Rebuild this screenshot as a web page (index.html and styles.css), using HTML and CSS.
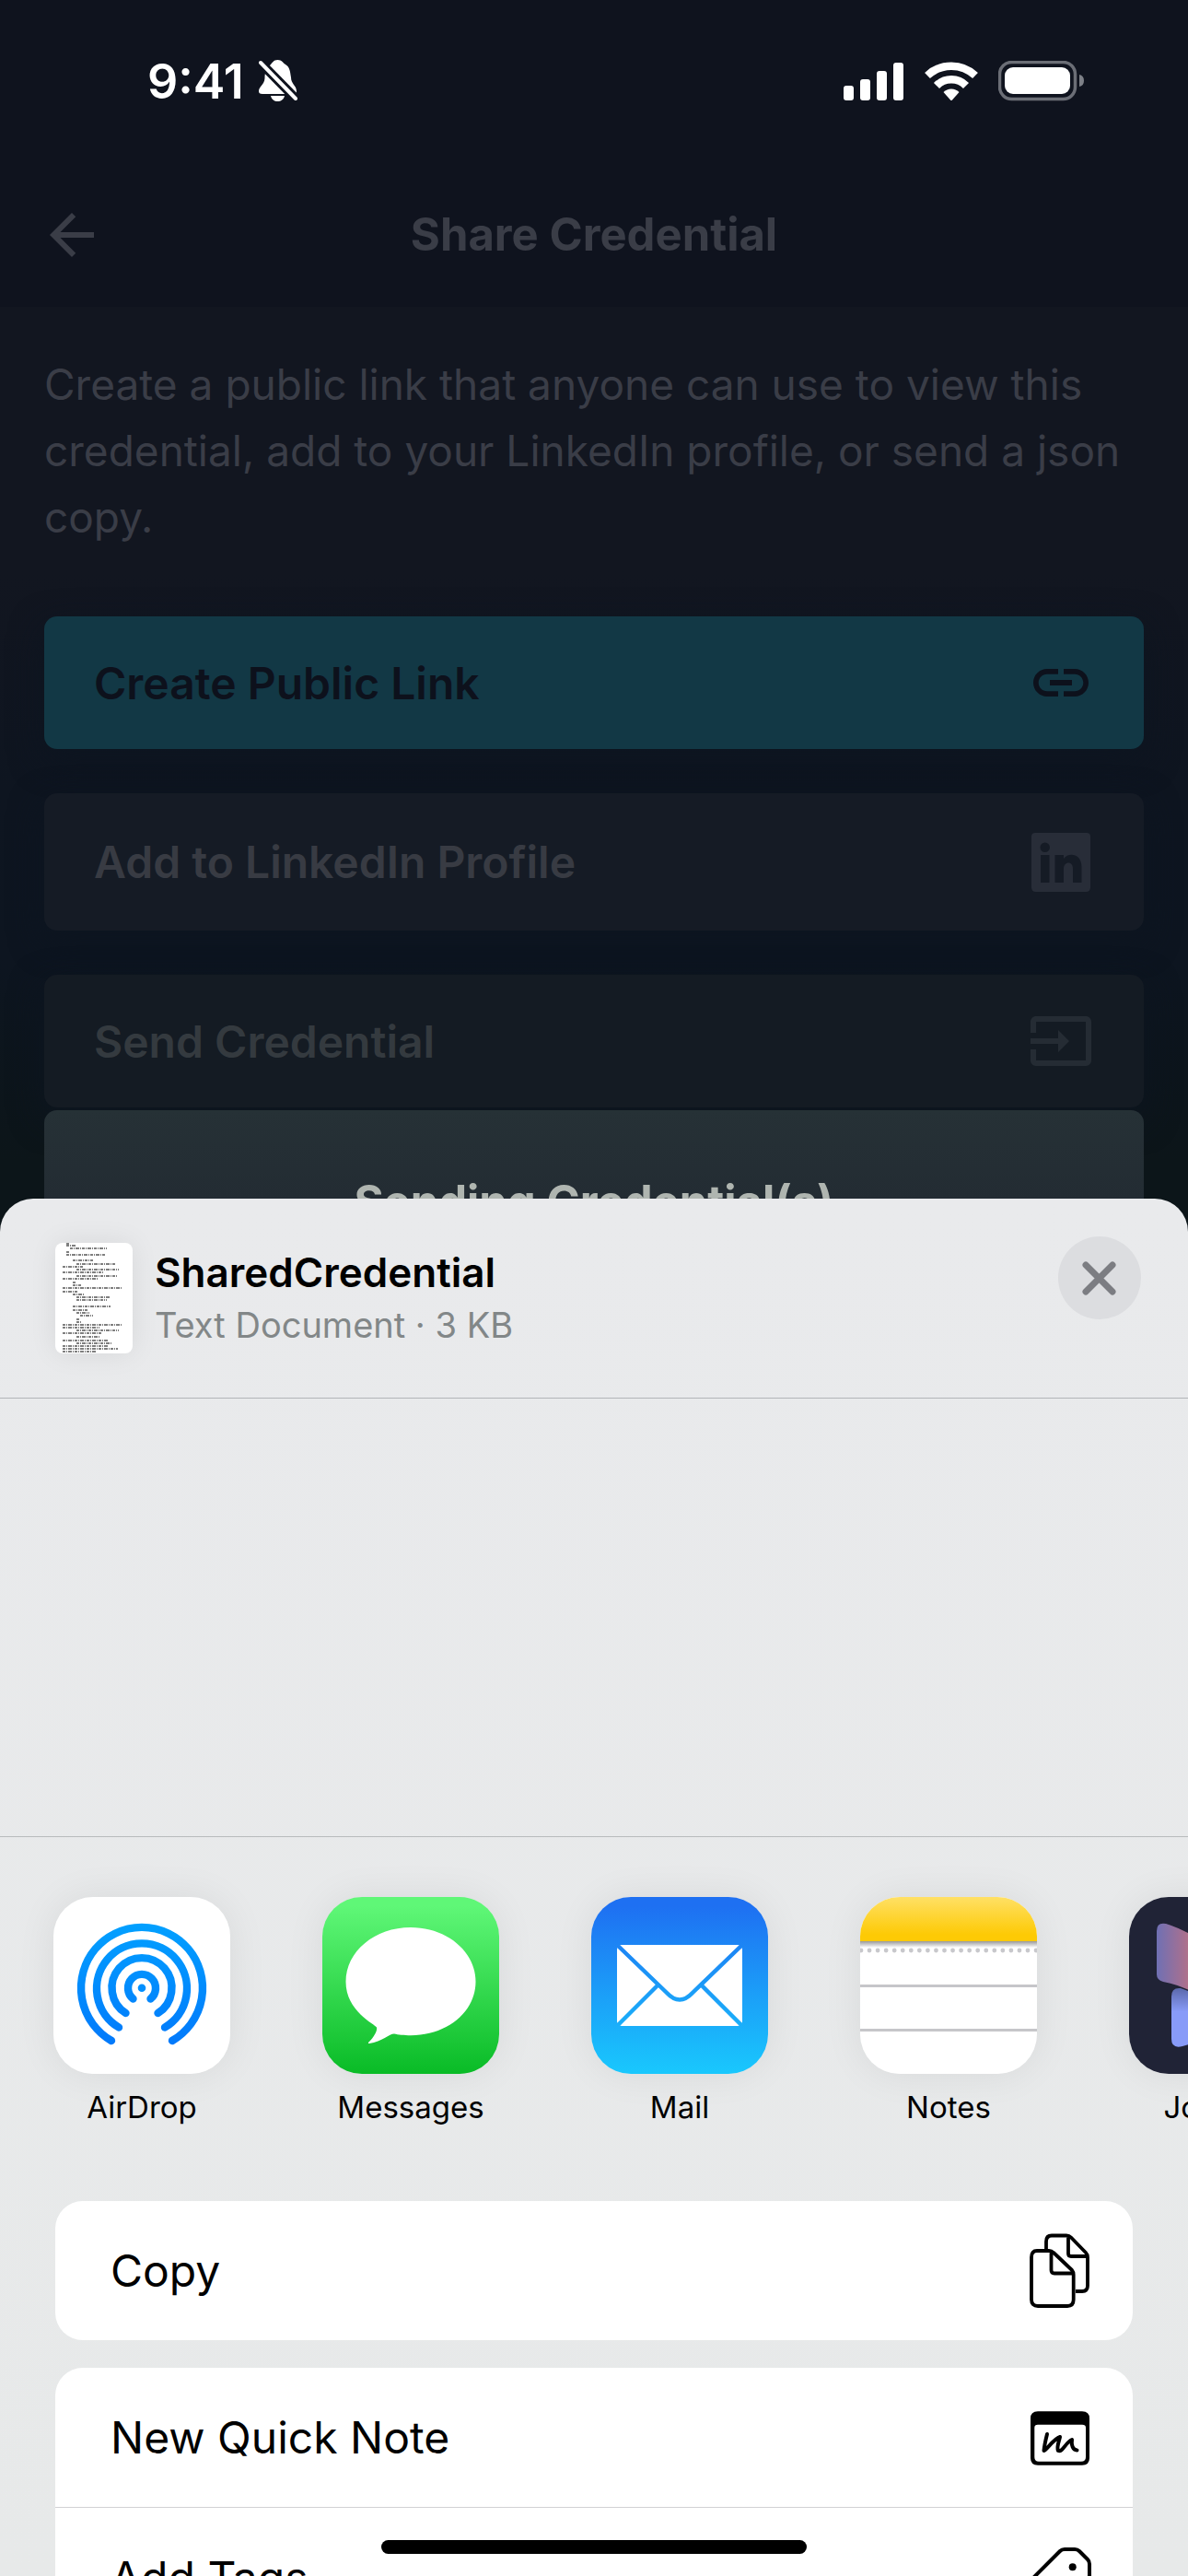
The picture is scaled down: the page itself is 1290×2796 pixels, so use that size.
FILE: index.html
```html
<!DOCTYPE html>
<html lang="en">
<head>
<meta charset="utf-8">
<meta name="viewport" content="width=device-width, initial-scale=1">
<title>Share Credential</title>
<link rel="stylesheet" href="styles.css">
</head>
<body>
<div class="screen">
  <div class="statusbar">
    <div class="status-left">
      <span>9:41</span>
      <svg width="42" height="48" viewBox="0 0 42 48" aria-hidden="true">
        <path fill="#fff" d="M12 7C15 4 16 1 20.500 1S26 4 29 6C34 9 34 14 35 20C35 27 41 29 41 35C41 37 40 38 37 38H4C1 38 0 37 0 35C0 30 6 28 6.500 21C6.500 15 8 10 12 7ZM13 40H28C27 44 24 46 20.500 46S14 44 13 40Z"/>
        <path stroke="#0f131e" stroke-width="10" d="M-2 0L44 47"/>
        <path stroke="#fff" stroke-width="4" stroke-linecap="round" d="M2 4L40 43"/>
      </svg>
    </div>
    <div class="status-right">
      <svg width="66" height="44" viewBox="0 0 66 44" fill="#fff" aria-hidden="true">
        <rect x="0" y="27" width="11" height="16" rx="3"/><rect x="18" y="20" width="11" height="23" rx="3"/><rect x="36" y="11" width="11" height="32" rx="3"/><rect x="54" y="2" width="11" height="41" rx="3"/>
      </svg>
      <svg width="58" height="44" viewBox="0 0 58 44" aria-hidden="true">
        <g fill="none" stroke="#fff" stroke-width="8.500"><path d="M3 16A38 38 0 0 1 55 16"/><path d="M13 27A22.500 22.500 0 0 1 45 27"/></g>
        <path fill="#fff" d="M20.500 34A12 12 0 0 1 37.500 34L30 42.500Q29 43.500 28 42.500Z"/>
      </svg>
      <svg width="94" height="44" viewBox="0 0 94 44" aria-hidden="true">
        <rect x="1.500" y="1.500" width="82" height="40" rx="13" fill="none" stroke="#6b6e76" stroke-width="3.500"/>
        <rect x="7" y="7" width="71" height="29" rx="9" fill="#fff"/>
        <path fill="#7d8087" d="M88 15Q93 16 93 21.500T88 28Z"/>
      </svg>
    </div>
  </div>

  <header class="topbar">
    <button class="back" aria-label="Back">
      <svg width="72" height="72" viewBox="0 0 24 24" fill="currentColor"><path d="M20 11H7.830l5.590-5.590L12 4l-8 8 8 8 1.410-1.410L7.830 13H20v-2z"/></svg>
    </button>
    <h1>Share Credential</h1>
  </header>

  <main class="content">
    <p>Create a public link that anyone can use to view this credential, add to your LinkedIn profile, or send a json copy.</p>
    <div class="options">
      <button class="option option-primary">
        <span>Create Public Link</span>
        <svg width="72" height="72" viewBox="0 0 24 24" fill="currentColor" aria-hidden="true"><path d="M3.900 12c0-1.710 1.390-3.100 3.100-3.100h4V7H7c-2.760 0-5 2.240-5 5s2.240 5 5 5h4v-1.900H7c-1.710 0-3.100-1.390-3.100-3.100zM8 13h8v-2H8v2zm9-6h-4v1.900h4c1.710 0 3.100 1.390 3.100 3.100s-1.390 3.100-3.100 3.100h-4V17h4c2.760 0 5-2.240 5-5s-2.240-5-5-5z"/></svg>
      </button>
      <button class="option option-tall">
        <span>Add to LinkedIn Profile</span>
        <svg width="72" height="72" viewBox="0 0 72 72" fill="currentColor" aria-hidden="true"><path fill-rule="evenodd" d="M8 4H64Q68 4 68 8V63Q68 68 63 68H9Q4 68 4 63V8Q4 4 8 4ZM14 28V58H23.500V28ZM18.700 14.500A5.200 5.200 0 1 0 18.700 25A5.200 5.200 0 1 0 18.700 14.500ZM29.500 28V58H39V43C39 35 49 34 49 43V58H58.500V41C58.500 26 44 25 39 32V28Z"/></svg>
      </button>
      <button class="option option-send">
        <span>Send Credential</span>
        <svg width="72" height="72" viewBox="0 0 24 24" fill="currentColor" aria-hidden="true"><path d="M21 3.010H3c-1.100 0-2 .9-2 2V9h2V4.990h18v14.030H3V15H1v4.010c0 1.100.9 1.980 2 1.980h18c1.100 0 2-.88 2-1.980v-14c0-1.110-.9-2-2-2zM11 16l4-4-4-4v3H1v2h10v3z"/></svg>
      </button>
    </div>
  </main>

  <div class="toast" role="status">Sending Credential(s)</div>

  <section class="sheet" aria-label="Share sheet">
    <div class="sheet-head">
      <svg class="thumb" width="84" height="120" viewBox="0 0 84 120" aria-hidden="true">
        <g stroke="#555" stroke-width="1.300" stroke-dasharray="3 1 1 1 4 1 1 1">
          <path d="M12 1h4M12 3h10M16 6h40M12 10h3M12 13h42M19 19h22M23 23h42M8 26h22M23 29h46M8 32h44M23 36h44M8 39h38"/>
          <path d="M19 43h3M19 46h9M8 49h65M8 53h16M19 56h12M23 59h37M23 62h33M19 69h41M19 73h17M23 76h14M27 79h14M23 83h3M23 86h5"/>
          <path d="M8 89h65M8 92h40M23 95h46M8 98h42M23 102h26M8 106h50M23 109h38M8 112h50M8 115h60M8 118h36"/>
        </g>
      </svg>
      <div class="file">
        <h2>SharedCredential</h2>
        <div class="meta">Text Document · 3 KB</div>
      </div>
      <button class="close" aria-label="Close">
        <svg width="90" height="90" viewBox="0 0 90 90" fill="none" stroke="currentColor" stroke-width="7" stroke-linecap="round"><path d="M30 31L59 60M59 31L30 60"/></svg>
      </button>
    </div>
    <div class="people"></div>
    <div class="apps">
      <button class="app">
        <svg width="192" height="192" viewBox="0 0 192 192" aria-hidden="true">
          <defs><linearGradient id="drop" gradientUnits="userSpaceOnUse" x1="0" y1="29" x2="0" y2="162"><stop offset="0" stop-color="#02a0ff"/><stop offset="1" stop-color="#0279fb"/></linearGradient></defs>
          <rect width="192" height="192" fill="#fff"/>
          <g fill="none" stroke="url(#drop)" stroke-width="8.400" stroke-linecap="round">
            <path d="M63 156A66 66 0 1 1 129 156"/><path d="M71 141.500A49 49 0 1 1 121 141.500"/><path d="M78.500 126A32.500 32.500 0 1 1 113.500 126"/><path d="M86.500 110.500A15 15 0 1 1 105.500 110.500"/>
          </g>
          <circle cx="96" cy="98.700" r="4.300" fill="#0290ff"/>
        </svg>
        <span>AirDrop</span>
      </button>
      <button class="app">
        <svg width="192" height="192" viewBox="0 0 192 192" aria-hidden="true">
          <defs><linearGradient id="msg" x1="0" y1="0" x2="0" y2="1"><stop offset="0.050" stop-color="#5ff777"/><stop offset="1" stop-color="#09bb26"/></linearGradient></defs>
          <rect width="192" height="192" fill="url(#msg)"/>
          <path fill="#fff" d="M96 33C135 33 166.500 59 166.500 92S135 150.300 96 150.300C89 150.300 82 149.500 78 148.600C73 148.500 65 157 51 159C49.500 159 49.500 158 51 157C56 152 60 145 59 141.500C57 138 25.500 124 25.500 92C25.500 59 57 33 96 33Z"/>
        </svg>
        <span>Messages</span>
      </button>
      <button class="app">
        <svg width="192" height="192" viewBox="0 0 192 192" aria-hidden="true">
          <defs>
            <linearGradient id="mail" x1="0" y1="0" x2="0" y2="1"><stop offset="0.050" stop-color="#1e70f2"/><stop offset="1" stop-color="#19c8fd"/></linearGradient>
            <mask id="folds"><rect width="192" height="192" fill="#fff"/><path fill="none" stroke="#000" stroke-width="4.500" d="M27 51L82 104Q96 119 110 104L165 51M27 141L72 96M165 141L120 96"/></mask>
          </defs>
          <rect width="192" height="192" fill="url(#mail)"/>
          <rect x="28" y="52" width="136" height="88" rx="5" fill="#fff" mask="url(#folds)"/>
        </svg>
        <span>Mail</span>
      </button>
      <button class="app">
        <svg width="192" height="192" viewBox="0 0 192 192" aria-hidden="true">
          <defs>
            <linearGradient id="note" x1="0" y1="0" x2="0" y2="1"><stop offset="0" stop-color="#ffe065"/><stop offset="0.850" stop-color="#fdca05"/></linearGradient>
            <linearGradient id="fade" x1="0" y1="0" x2="0" y2="1"><stop offset="0" stop-color="#999"/><stop offset="1" stop-color="#fff"/></linearGradient>
          </defs>
          <rect width="192" height="192" fill="#fff"/><rect width="192" height="48" fill="url(#note)"/><rect y="48" width="192" height="7" fill="url(#fade)"/>
          <path d="M1 58H192" stroke="#c8c8cc" stroke-width="4.800" stroke-linecap="round" stroke-dasharray="0 9.050"/>
          <path d="M0 96.500H192M0 144.500H192" stroke="#c6c6c9" stroke-width="3"/>
        </svg>
        <span>Notes</span>
      </button>
      <button class="app">
        <svg width="192" height="192" viewBox="0 0 192 192" aria-hidden="true">
          <defs>
            <linearGradient id="wing" x1="0" y1="0" x2="1" y2="0"><stop offset="0" stop-color="#6f70b4"/><stop offset="0.500" stop-color="#a9708f"/><stop offset="1" stop-color="#e58a72"/></linearGradient>
            <linearGradient id="tail" x1="0" y1="0" x2="0" y2="1"><stop offset="0" stop-color="#5b68ab"/><stop offset="0.400" stop-color="#889bf8"/></linearGradient>
          </defs>
          <rect width="192" height="192" fill="#202336"/>
          <path fill="url(#tail)" d="M46 108Q46 98 56 99L92 112V152L58 162Q46 165 46 154Z"/>
          <path fill="url(#wing)" d="M30 37Q30 27 40 29Q68 38 92 58V118Q66 97 37 92Q30 90 30 84Z"/>
        </svg>
        <span>Journal</span>
      </button>
    </div>

    <div class="actions">
      <div class="card">
        <button class="action">
          <span>Copy</span>
          <svg width="72" height="84" viewBox="0 0 72 84" fill="none" stroke="currentColor" stroke-width="3.800" stroke-linejoin="round" aria-hidden="true">
            <path d="M21 18V10Q21 3.500 27 3.500H43Q46 3.500 48 5.500L64 22Q66 24 66 27V58Q66 64 60 64H53M45 4V23Q45 26 48 26H65"/>
            <path d="M5 27Q5 20 11 20H24Q27 20 29 22L49 41Q50.700 43 50.700 46V73Q50.700 80 44 80H12Q5 80 5 73ZM26.500 20V41Q26.500 44.500 30 44.500H50"/>
          </svg>
        </button>
      </div>
      <div class="card">
        <button class="action">
          <span>New Quick Note</span>
          <svg width="72" height="72" viewBox="0 0 72 72" aria-hidden="true">
            <path fill="currentColor" fill-rule="evenodd" d="M12 7.300H60Q68 7.300 68 15V58Q68 65.700 60 65.700H12Q4 65.700 4 58V15Q4 7.300 12 7.300ZM12 21.700Q8.300 21.700 8.300 25V57Q8.300 61.700 13 61.700H59Q64 61.700 64 57V25Q64 21.700 60 21.700Z"/>
            <path fill="none" stroke="currentColor" stroke-width="4" stroke-linecap="round" stroke-linejoin="round" d="M22 32C20 40 19 45 18.500 50C21 50 29 37 36 35C35 40 32 46 34 50C39 52 42 41 49 38C48 44 50 49 54.500 49.500"/>
          </svg>
        </button>
        <button class="action">
          <span>Add Tags</span>
          <svg width="72" height="72" viewBox="0 0 72 72" fill="none" stroke="currentColor" stroke-width="4" stroke-linejoin="round" aria-hidden="true">
            <path d="M7 37L36 8Q38 6 41 6H52Q55 6 57 8L66 17Q68 19 68 22V34Q68 37 66 39L38 67Q35 70 32 67L7 43Q4 40 7 37Z"/><circle cx="49.700" cy="25.300" r="4" fill="currentColor" stroke="none"/>
          </svg>
        </button>
      </div>
    </div>
  </section>
  <div class="home"></div>
</div>
</body>
</html>
```
FILE: styles.css
```css
* {
  box-sizing: border-box;
}

body {
  margin: 0;
  background: #0c1519;
  font-family: Inter, "Liberation Sans", sans-serif;
}

button {
  margin: 0;
  padding: 0;
  border: 0;
  background: none;
  color: inherit;
  font: inherit;
  cursor: pointer;
}

h1,
h2,
p {
  margin: 0;
}

svg {
  display: block;
  flex: none;
}

.screen {
  position: relative;
  height: 100vh;
  overflow: hidden;
  background: linear-gradient(#121620 620px, #0e1520 860px, #0d1520 1040px, #0c1519 1260px);
}

.statusbar {
  display: flex;
  justify-content: space-between;
  align-items: center;
  height: 176px;
  padding: 0 112px 0 160px;
  background: #0f131e;
  color: #fff;
}

.status-left,
.status-right {
  display: flex;
  align-items: center;
}

.status-left {
  gap: 16px;
  font-size: 52px;
  font-weight: 600;
}

.status-right {
  gap: 22px;
}

.topbar {
  display: grid;
  grid-template-columns: 72px 1fr 72px;
  align-items: center;
  height: 157px;
  padding: 0 42px;
  background: #0f131e;
  color: #3a3d47;
}

.topbar h1 {
  font-size: 49px;
  font-weight: 700;
  text-align: center;
}

.content {
  padding: 48px;
  font-size: 46px;
  color: #3a3d47;
}

.content p {
  line-height: 72px;
}

.options {
  display: grid;
  gap: 48px;
  margin-top: 72px;
}

.option {
  display: flex;
  justify-content: space-between;
  align-items: center;
  min-height: 144px;
  padding: 0 54px;
  border-radius: 14px;
  background: #151b25;
  color: #282d38;
  font-size: 48px;
  font-weight: 600;
  box-shadow: 0 12px 36px #0d1520;
}

.option span {
  color: #383b43;
}

.option-primary,
.option-primary span {
  background: #123845;
  color: #0d111c;
}

.option-tall {
  min-height: 149px;
}

.option-send {
  background: #141b23;
  color: #252c34;
}

.option-send span {
  color: #343a3f;
}

.toast {
  position: absolute;
  top: 1205px;
  left: 48px;
  right: 48px;
  padding: 64px 48px;
  border-radius: 14px;
  background: linear-gradient(#263136, #232c33 96px);
  color: #afb5b0;
  font-size: 49px;
  font-weight: 700;
  line-height: 72px;
  text-align: center;
}

.sheet {
  position: absolute;
  top: 1301px;
  left: 0;
  right: 0;
  bottom: 0;
  overflow: hidden;
  border-radius: 36px 36px 0 0;
  background: linear-gradient(#e9eaec, #e7e9e9);
  color: #000;
}

.sheet-head {
  display: flex;
  align-items: flex-start;
  gap: 24px;
  height: 217px;
  padding: 48px 51px 0 60px;
  border-bottom: 1px solid #b2b5b8;
}

.thumb {
  border-radius: 8px;
  background: #fff;
  box-shadow: 0 0 30px rgba(0, 0, 0, 0.08);
}

.file {
  flex: 1;
  padding-top: 4px;
}

.file h2 {
  font-size: 44px;
  font-weight: 600;
  line-height: 56px;
}

.meta {
  color: #828788;
  font-size: 38px;
  line-height: 58px;
}

.close {
  margin-top: -7px;
  border-radius: 50%;
  background: #dcdde0;
  color: #7c7d82;
}

.people {
  height: 476px;
  border-bottom: 1px solid #b8bbbd;
}

.apps {
  display: flex;
  gap: 100px;
  padding: 65px 0 78px 58px;
  overflow: hidden;
}

.app {
  display: grid;
  flex: none;
  gap: 12px;
  width: 192px;
  font-size: 33px;
  line-height: 48px;
  text-align: center;
}

.app svg {
  border-radius: 43px;
  box-shadow: 0 0 44px rgba(0, 0, 0, 0.07);
}

.actions {
  display: grid;
  gap: 30px;
  padding: 0 60px;
}

.card {
  overflow: hidden;
  border-radius: 30px;
  background: #fff;
}

.action {
  display: flex;
  justify-content: space-between;
  align-items: center;
  width: 100%;
  height: 151px;
  padding: 0 43px 0 60px;
  font-size: 48px;
}

.action + .action {
  border-top: 1px solid #d2d2d4;
}

.home {
  position: absolute;
  bottom: 24px;
  left: 50%;
  width: 462px;
  height: 15px;
  margin-left: -231px;
  border-radius: 8px;
  background: #000;
}
```
